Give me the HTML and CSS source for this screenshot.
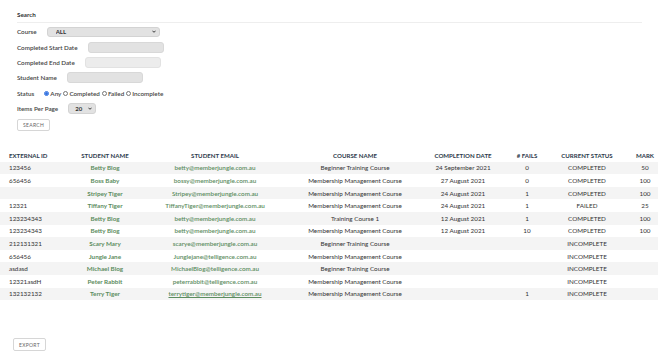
FILE: index.html
```html
<!DOCTYPE html>
<html lang="en">
<head>
  <meta charset="UTF-8">
  <meta name="viewport" content="width=device-width, initial-scale=1.0">
  <title>Student Results</title>
  <link rel="stylesheet" href="styles.css">
</head>
<body>
  <!-- Search panel -->
  <section class="search-panel">
    <h3 class="panel-title">Search</h3>
    <form class="search-form">
      <div class="field">
        <label for="course">Course</label>
        <span class="select-wrap course-select">
          <select id="course">
            <option>ALL</option>
            <option>Beginner Training Course</option>
            <option>Membership Management Course</option>
            <option>Training Course 1</option>
          </select>
          <svg class="chevron" viewBox="0 0 10 6"><path d="M1 1l4 4 4-4" /></svg>
        </span>
      </div>
      <div class="field">
        <label for="startDate">Completed Start Date</label>
        <input type="text" id="startDate" class="text-input">
      </div>
      <div class="field">
        <label for="endDate">Completed End Date</label>
        <input type="text" id="endDate" class="text-input light">
      </div>
      <div class="field">
        <label for="studentName">Student Name</label>
        <input type="text" id="studentName" class="text-input">
      </div>
      <div class="field">
        <label>Status</label>
        <span class="radio-group">
          <label class="radio"><input type="radio" name="status" checked> Any</label>
          <label class="radio"><input type="radio" name="status"> Completed</label>
          <label class="radio"><input type="radio" name="status"> Failed</label>
          <label class="radio"><input type="radio" name="status"> Incomplete</label>
        </span>
      </div>
      <div class="field">
        <label for="perPage">Items Per Page</label>
        <span class="select-wrap page-select">
          <select id="perPage">
            <option>20</option>
            <option>50</option>
            <option>100</option>
          </select>
          <svg class="chevron" viewBox="0 0 10 6"><path d="M1 1l4 4 4-4" /></svg>
        </span>
      </div>
      <button type="submit" class="btn">Search</button>
    </form>
  </section>

  <!-- Results -->
  <table class="results">
    <colgroup>
      <col style="width: 60px">
      <col style="width: 90px">
      <col style="width: 130px">
      <col style="width: 150px">
      <col style="width: 66px">
      <col style="width: 62px">
      <col style="width: 58px">
      <col style="width: 42px">
    </colgroup>
    <thead>
      <tr>
        <th class="id">External ID</th>
        <th>Student Name</th>
        <th>Student Email</th>
        <th>Course Name</th>
        <th>Completion Date</th>
        <th># Fails</th>
        <th>Current Status</th>
        <th class="mark">Mark</th>
      </tr>
    </thead>
    <tbody>
      <tr>
        <td class="id">123456</td><td class="name">Betty Blog</td><td class="email">betty@memberjungle.com.au</td>
        <td>Beginner Training Course</td><td>24 September 2021</td><td>0</td><td>COMPLETED</td><td class="mark">50</td>
      </tr>
      <tr>
        <td class="id">656456</td><td class="name">Boss Baby</td><td class="email">bossy@memberjungle.com.au</td>
        <td>Membership Management Course</td><td>27 August 2021</td><td>0</td><td>COMPLETED</td><td class="mark">100</td>
      </tr>
      <tr>
        <td class="id"></td><td class="name">Stripey Tiger</td><td class="email">Stripey@memberjungle.com.au</td>
        <td>Membership Management Course</td><td>24 August 2021</td><td>1</td><td>COMPLETED</td><td class="mark">100</td>
      </tr>
      <tr>
        <td class="id">12321</td><td class="name">Tiffany Tiger</td><td class="email">TiffanyTiger@memberjungle.com.au</td>
        <td>Membership Management Course</td><td>24 August 2021</td><td>1</td><td>FAILED</td><td class="mark">25</td>
      </tr>
      <tr>
        <td class="id">123234343</td><td class="name">Betty Blog</td><td class="email">betty@memberjungle.com.au</td>
        <td>Training Course 1</td><td>12 August 2021</td><td>1</td><td>COMPLETED</td><td class="mark">100</td>
      </tr>
      <tr>
        <td class="id">123234343</td><td class="name">Betty Blog</td><td class="email">betty@memberjungle.com.au</td>
        <td>Membership Management Course</td><td>12 August 2021</td><td>10</td><td>COMPLETED</td><td class="mark">100</td>
      </tr>
      <tr>
        <td class="id">212131321</td><td class="name">Scary Mary</td><td class="email">scarye@memberjungle.com.au</td>
        <td>Beginner Training Course</td><td></td><td></td><td>INCOMPLETE</td><td class="mark"></td>
      </tr>
      <tr>
        <td class="id">656456</td><td class="name">Jungle Jane</td><td class="email">Junglejane@telligence.com.au</td>
        <td>Membership Management Course</td><td></td><td></td><td>INCOMPLETE</td><td class="mark"></td>
      </tr>
      <tr>
        <td class="id">asdasd</td><td class="name">Michael Blog</td><td class="email">MichaelBlog@telligence.com.au</td>
        <td>Beginner Training Course</td><td></td><td></td><td>INCOMPLETE</td><td class="mark"></td>
      </tr>
      <tr>
        <td class="id">12321asdH</td><td class="name">Peter Rabbit</td><td class="email">peterrabbit@telligence.com.au</td>
        <td>Membership Management Course</td><td></td><td></td><td>INCOMPLETE</td><td class="mark"></td>
      </tr>
      <tr>
        <td class="id">132132132</td><td class="name">Terry Tiger</td><td class="email"><a href="#">terrytiger@memberjungle.com.au</a></td>
        <td>Membership Management Course</td><td></td><td>1</td><td>INCOMPLETE</td><td class="mark"></td>
      </tr>
    </tbody>
  </table>

  <div class="actions">
    <button type="button" class="btn">Export</button>
  </div>
</body>
</html>
```

FILE: styles.css
```css
* {
  margin: 0;
  padding: 0;
  box-sizing: border-box;
}

body {
  font-family: Lato, "Noto Sans", sans-serif;
  font-size: 6.3px;
  color: #333;
  background-color: #ffffff;
}

/* Search panel */
.search-panel {
  padding: 10px 28px 0 17px;
}

.panel-title {
  font-size: 6.3px;
  font-weight: 700;
  color: #333;
  line-height: 10px;
  padding-bottom: 2px;
  border-bottom: 1px solid #eeeeee;
}

.search-form {
  padding-top: 1.3px;
}

.field {
  display: flex;
  align-items: center;
  gap: 10px;
  height: 15.3px;
}

.field > label {
  font-weight: 600;
  color: #444;
}

.text-input {
  width: 76px;
  height: 11px;
  background-color: #e2e2e2;
  border: 1px solid #d8d8d8;
  border-radius: 3px;
}

.text-input.light {
  background-color: #ececec;
  border-color: #e2e2e2;
}

.select-wrap {
  position: relative;
  display: inline-block;
}

.select-wrap select {
  appearance: none;
  -webkit-appearance: none;
  display: block;
  width: 100%;
  height: 100%;
  background-color: #e2e2e2;
  border: 1px solid #d3d3d3;
  border-radius: 3px;
  font-family: inherit;
  font-size: 6px;
  font-weight: 700;
  color: #333;
  padding: 0 8px;
}

.course-select {
  width: 113px;
  height: 10.5px;
}

.page-select {
  width: 28px;
  height: 11px;
}

.page-select select {
  padding: 0 6px;
}

.chevron {
  position: absolute;
  right: 4px;
  top: 50%;
  width: 4px;
  height: 3px;
  margin-top: -1.5px;
  fill: none;
  stroke: #222;
  stroke-width: 2.2;
}

.radio-group {
  display: flex;
  align-items: center;
  gap: 2px;
  font-weight: 600;
  color: #444;
}

.radio {
  display: flex;
  align-items: center;
  gap: 1px;
}

.radio input {
  width: 5px;
  height: 5px;
  margin: 0;
  accent-color: #2f6fe0;
}

.btn {
  display: block;
  background-color: #ffffff;
  border: 1px solid #d6d6d6;
  border-radius: 2px;
  color: #666;
  font-family: inherit;
  font-size: 5px;
  letter-spacing: 0.3px;
  text-transform: uppercase;
  height: 12px;
  padding: 0 5px;
}

.search-form .btn {
  margin-top: 3px;
}

/* Results table */
.results {
  margin-top: 18px;
  width: 658px;
  border-collapse: collapse;
  table-layout: fixed;
}

.results th,
.results td {
  text-align: center;
  height: 12.6px;
  padding: 0 2px;
  white-space: nowrap;
  overflow: hidden;
}

.results th {
  font-weight: 700;
  color: #2c3a4b;
  text-transform: uppercase;
  font-size: 6.1px;
}

.results .id {
  text-align: left;
  padding-left: 9px;
}

.results .mark {
  padding-left: 18px;
}

.results tbody tr:nth-child(odd) {
  background-color: #f4f4f4;
}

.results .name,
.results .email,
.results .email a {
  color: #5b8c5e;
  font-weight: 700;
}

.results .email,
.results .email a {
  font-weight: 600;
}

.results .email a {
  text-decoration: underline;
}

.actions {
  padding: 38px 0 0 13px;
}

.actions .btn {
  height: 13px;
}
```
